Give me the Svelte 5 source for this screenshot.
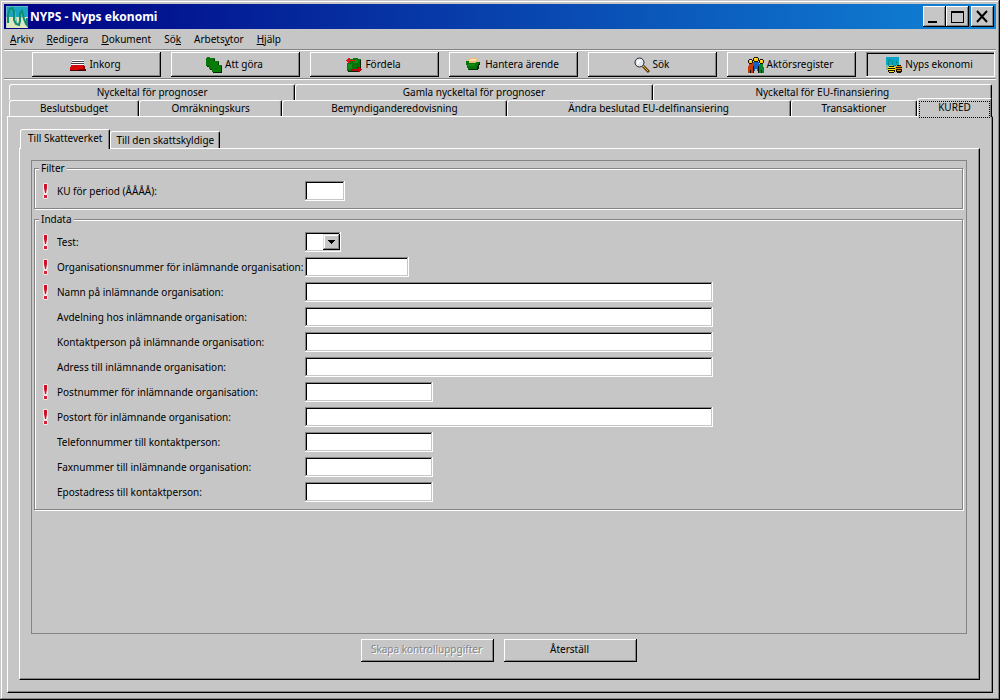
<script>
  const menu = [
    { pre: "", key: "A", post: "rkiv" },
    { pre: "", key: "R", post: "edigera" },
    { pre: "", key: "D", post: "okument" },
    { pre: "Sö", key: "k", post: "" },
    { pre: "Arbets", key: "y", post: "tor" },
    { pre: "", key: "H", post: "jälp" },
  ];

  const tools = [
    { icon: "inbox", text: "Inkorg" },
    { icon: "todo", text: "Att göra" },
    { icon: "assign", text: "Fördela" },
    { icon: "handle", text: "Hantera ärende" },
    { icon: "search", text: "Sök" },
    { icon: "actors", text: "Aktörsregister" },
    { icon: "economy", text: "Nyps ekonomi" },
  ];

  const backTabs = [
    "Nyckeltal för prognoser",
    "Gamla nyckeltal för prognoser",
    "Nyckeltal för EU-finansiering",
  ];
  const frontTabs = [
    "Beslutsbudget",
    "Omräkningskurs",
    "Bemyndiganderedovisning",
    "Ändra beslutad EU-delfinansiering",
    "Transaktioner",
    "KURED",
  ];
  const innerTabs = ["Till Skatteverket", "Till den skattskyldige"];

  let activeTool = $state("Nyps ekonomi");
  let activeTab = $state("KURED");
  let activeInner = $state("Till Skatteverket");

  let period = $state("");
  let test = $state("");

  let fields = $state([
    { id: "orgnr", label: "Organisationsnummer för inlämnande organisation:", required: true, size: "code", value: "" },
    { id: "namn", label: "Namn på inlämnande organisation:", required: true, size: "long", value: "" },
    { id: "avdelning", label: "Avdelning hos inlämnande organisation:", required: false, size: "long", value: "" },
    { id: "kontakt", label: "Kontaktperson på inlämnande organisation:", required: false, size: "long", value: "" },
    { id: "adress", label: "Adress till inlämnande organisation:", required: false, size: "long", value: "" },
    { id: "postnr", label: "Postnummer för inlämnande organisation:", required: true, size: "medium", value: "" },
    { id: "postort", label: "Postort för inlämnande organisation:", required: true, size: "long", value: "" },
    { id: "telefon", label: "Telefonnummer till kontaktperson:", required: false, size: "medium", value: "" },
    { id: "fax", label: "Faxnummer till inlämnande organisation:", required: false, size: "medium", value: "" },
    { id: "epost", label: "Epostadress till kontaktperson:", required: false, size: "medium", value: "" },
  ]);

  function reset() {
    period = "";
    test = "";
    fields.forEach((f) => {
      f.value = "";
    });
  }
</script>

{#snippet mark(required)}
  <span class="mark">
    {#if required}
      <svg width="5" height="16" viewBox="0 0 5 16">
        <path d="M1 0h3l1 1v8l-1 2 1 1v3l-1 1H1l-1-1v-3l1-1-1-2V1z" fill="#f7e7e7" />
        <path d="M1 1h3v4L3 10H2L1 5z" fill="#ce1029" />
        <path d="M1 12h3v3H1z" fill="#d62139" />
      </svg>
    {/if}
  </span>
{/snippet}

{#snippet toolIcon(name)}
  <svg width="16" height="16" viewBox="0 0 16 16" shape-rendering="crispEdges">
    {#if name === "inbox"}
      <path d="M2 3h12v1H2zM2 5h12v1H2zM1 7h13v1H1z" fill="#fff" />
      <path d="M2 4h12v1H2zM1 6h13v1H1z" fill="#42424a" />
      <path d="M1 8h13v1h1v3h1v1H0v-3h1z" fill="#d60808" />
      <path d="M14 8v1h1v3h1v1H9v-1h4V8z" fill="#840000" />
      <path d="M0 13h16v1H0z" fill="#420000" />
    {:else if name === "todo"}
      <path d="M0 1h1V0h3v1h5v9H1V9H0z" fill="#087308" />
      <path d="M8 2h1v8H1V9h7z" fill="#003900" />
      <path d="M3 4h1V3h3v1h6v9H4v-1H3z" fill="#087b08" />
      <path d="M12 5h1v8H4v-1h8z" fill="#003900" />
      <path d="M6 8h1V7h3v1h6v8H7v-1H6z" fill="#087b08" />
      <path d="M7 15h9v1H7zM15 9h1v6h-1z" fill="#002900" />
    {:else if name === "assign"}
      <path d="M4 2h3V1h5v1h3v9h-2v3H1V6h3z" fill="#087308" />
      <path d="M14 3h1v8h-4v-1h3zM2 14h11v1H2z" fill="#002100" />
      <path d="M2 7h4v5H2zM8 3h4v3H8z" fill="#188c18" />
      <path d="M0 3h1V2h1V1h2v2h5v1H4v2H2V5H1V4H0z" fill="#e71018" />
      <path d="M5 12h7v-2h2v1h1v1h1v1h-1v1h-1v1h-2v-1H5z" fill="#b50810" />
    {:else if name === "handle"}
      <path d="M2 2h2V1h8v6H3V5H2z" fill="#e7bd7b" />
      <path d="M4 2h7v1H4zM3 3h7v1H3z" fill="#ffdea5" />
      <path d="M0 4h3v2h7V5h4v3h-1v4h-1v1H2v-2H1V8H0z" fill="#087308" />
      <path d="M2 7h7v2H2z" fill="#108c10" />
      <path d="M13 5h1v3h-1v4h-1v1H3v-1h8V9h1V7h1z" fill="#002900" />
    {:else if name === "search"}
      <path d="M9 9l6 6" stroke="#5a3908" stroke-width="3" shape-rendering="auto" />
      <path d="M9 9l5 5" stroke="#f7b529" stroke-width="1" shape-rendering="auto" />
      <circle cx="5.5" cy="5.5" r="4.5" fill="#dee7ef" stroke="#212121" stroke-width="1" shape-rendering="auto" />
      <path d="M3 4h1V3h3v2H5v2H3z" fill="#fff" />
    {:else if name === "actors"}
      <path d="M1 6h5v4H5v6H3v-3H2v3H0V9h1z" fill="#c63908" />
      <path d="M10 7h5v3h1v6h-2v-3h-1v3h-2v-6h-1z" fill="#088429" />
      <path d="M5 5h6v4h-1v5H9v-2H7v2H6V9H5z" fill="#1063c6" />
      <path d="M6 0h4v1h1v3h-1v1H6V4H5V1h1zM1 2h3v1h1v3H4v1H1V6H0V3h1zM12 2h3v1h1v3h-1v1h-3V6h-1V3h1z" fill="#181000" />
      <path d="M6 1h4v3H6zM1 3h3v3H1zM12 3h3v3h-3z" fill="#ffc610" />
      <path d="M7 1h1v1H7zM2 3h1v1H2zM13 3h1v1h-1z" fill="#fff" />
      <path d="M2 13h1v3H2zM13 13h1v3h-1zM5 9h1v7H5zM10 9h1v7h-1z" fill="#101010" />
    {:else}
      <path d="M0 0h13v9H0z" fill="#08a5c6" />
      <path d="M0 8h13v5H0z" fill="#84bda5" />
      <path d="M2 9V5l2-3 2 2 1 4 3 0 1-4" fill="none" stroke="#088c8c" />
      <path d="M3 9h5v1h1v5H8v1H3v-1H2v-5h1zM11 8h4v1h1v6h-1v1h-4v-1h-1V9h1z" fill="#181000" />
      <path d="M2 10h7v1H2zM2 12h7v1H2zM3 14h5v1H3z" fill="#f7e718" />
      <path d="M10 9h6v1h-6zM10 11h6v1h-6zM11 13h4v1h-4z" fill="#e78c08" />
    {/if}
  </svg>
{/snippet}

<div class="window">
  <header class="titlebar">
    <svg class="logo" width="22" height="22" viewBox="0 0 22 22">
      <rect width="22" height="12" fill="#18a5c6" />
      <rect y="11" width="22" height="11" fill="#dee7bd" />
      <path d="M3 16l-1-4 2-7 3-2 2 3 1 7 1 6M12 19l2-4 2-8M19 13l2 5" fill="none" stroke="#63b5a5" stroke-width="1" />
      <path d="M2 17V9l2-6 2-1 2 3v9l2 4 3 1 1-4V7l2-2 2 8 2 5 1 1V12" fill="none" stroke="#108c73" stroke-width="2" />
      <path d="M0 22V0h22" fill="none" stroke="#9cc6bd" stroke-width="1" />
    </svg>
    <h1>NYPS - Nyps ekonomi</h1>
    <div class="controls">
      <button class="raised" aria-label="Minimera">
        <svg width="23" height="21" viewBox="0 0 23 21"><path d="M5 15h9v2H5z" /></svg>
      </button>
      <button class="raised" aria-label="Maximera">
        <svg width="23" height="21" viewBox="0 0 23 21"><path fill-rule="evenodd" d="M5 5h13v12H5zM6 7v9h11V7z" /></svg>
      </button>
      <button class="raised close" aria-label="Stäng">
        <svg width="23" height="21" viewBox="0 0 23 21"><path d="M6 5l10 11M16 5L6 16" stroke="#000" stroke-width="2" /></svg>
      </button>
    </div>
  </header>

  <nav class="menu">
    {#each menu as item}
      <button>{item.pre}<u>{item.key}</u>{item.post}</button>
    {/each}
  </nav>

  <div class="toolbar">
    {#each tools as tool}
      <button
        class="raised"
        class:pressed={tool.text === activeTool}
        onclick={() => (activeTool = tool.text)}
      >
        {@render toolIcon(tool.icon)}
        <span>{tool.text}</span>
      </button>
    {/each}
  </div>

  <main>
    <div class="tabs back">
      {#each backTabs as tab}
        <button class="tab" onclick={() => (activeTab = tab)}>{tab}</button>
      {/each}
    </div>
    <div class="tabs front">
      {#each frontTabs as tab}
        <button class="tab" class:active={tab === activeTab} onclick={() => (activeTab = tab)}>
          <span>{tab}</span>
        </button>
      {/each}
    </div>

    <div class="panel outer">
      <div class="tabs inner">
        {#each innerTabs as tab}
          <button class="tab" class:active={tab === activeInner} onclick={() => (activeInner = tab)}>
            {tab}
          </button>
        {/each}
      </div>

      <form class="panel sheet" onsubmit={(e) => e.preventDefault()}>
        <div class="content">
          <fieldset>
            <legend>Filter</legend>
            <div class="row">
              {@render mark(true)}
              <label for="period">KU för period (ÅÅÅÅ):</label>
              <input id="period" class="year" type="text" bind:value={period} />
            </div>
          </fieldset>

          <fieldset>
            <legend>Indata</legend>
            <div class="row">
              {@render mark(true)}
              <label for="test">Test:</label>
              <span class="combo">
                <select id="test" bind:value={test}>
                  <option value=""></option>
                  <option value="J">J</option>
                  <option value="N">N</option>
                </select>
                <span class="arrow">
                  <svg width="7" height="4" viewBox="0 0 7 4"><path d="M0 0h7v1H6v1H5v1H4v1H3V3H2V2H1V1H0z" /></svg>
                </span>
              </span>
            </div>
            {#each fields as field}
              <div class="row">
                {@render mark(field.required)}
                <label for={field.id}>{field.label}</label>
                <input id={field.id} class={field.size} type="text" bind:value={field.value} />
              </div>
            {/each}
          </fieldset>
        </div>

        <div class="actions">
          <button class="raised" type="submit" disabled>Skapa kontrolluppgifter</button>
          <button class="raised" type="button" onclick={reset}>Återställ</button>
        </div>
      </form>
    </div>
  </main>
</div>

<style>
  :global(body) {
    margin: 0;
    background: #c6c6c6;
  }

  .window {
    display: flex;
    flex-direction: column;
    min-height: 100vh;
    box-sizing: border-box;
    padding: 4px;
    background: #c6c6c6;
    box-shadow: inset -1px -1px #000, inset 1px 1px #c6c6c6, inset -2px -2px #848484, inset 2px 2px #fff;
    color: #000;
    font-family: "Noto Sans", "Liberation Sans", sans-serif;
    font-size: 10px;
    line-height: 13px;
  }

  button, input, select {
    box-sizing: border-box;
    margin: 0;
    padding: 0;
    border: 0;
    border-radius: 0;
    background: #c6c6c6;
    color: #000;
    font: inherit;
  }

  svg {
    display: block;
    flex: none;
  }

  .raised {
    display: flex;
    align-items: center;
    justify-content: center;
    box-shadow: inset -1px -1px #000, inset 1px 1px #fff, inset -2px -2px #848484;
  }

  .raised.pressed {
    box-shadow: inset -1px -1px #fff, inset 1px 1px #848484, inset 2px 2px #000;
  }

  .titlebar {
    display: flex;
    align-items: center;
    gap: 2px;
    height: 25px;
    padding: 0 2px;
    background: linear-gradient(to right, #000084, #1084d6);
  }

  h1 {
    flex: 1;
    margin: 0;
    color: #fff;
    font-size: 12px;
    line-height: 16px;
    white-space: nowrap;
  }

  .controls {
    display: flex;
  }

  .controls button {
    width: 23px;
    height: 21px;
  }

  .controls .close {
    margin-left: 2px;
  }

  .menu {
    display: flex;
    align-items: center;
    gap: 13px;
    height: 20px;
    padding: 0 6px;
  }

  .toolbar {
    display: flex;
    gap: 10px;
    padding: 3px 1px 3px 28px;
    box-shadow: inset 0 1px #848484, inset 0 2px #fff, inset 0 -1px #fff, inset 0 -2px #848484;
  }

  .toolbar button {
    flex: 1;
    gap: 3px;
    height: 25px;
    padding-right: 2px;
    white-space: nowrap;
  }

  main {
    display: flex;
    flex: 1;
    flex-direction: column;
    padding: 4px 3px 3px;
  }

  .tabs {
    display: grid;
  }

  .tab {
    height: 16px;
    border-top: 1px solid #fff;
    border-left: 1px solid #fff;
    border-right: 1px solid #000;
    border-radius: 3px 2px 0 0;
    box-shadow: inset -1px 0 #848484;
    white-space: nowrap;
  }

  .back, .front {
    margin: 0 1px 0 2px;
  }

  .back {
    grid-template-columns: 286fr 357fr 339fr;
  }

  .front {
    grid-template-columns: 130fr 143fr 224fr 284fr 126fr 75fr;
  }

  .tab.active {
    position: relative;
    z-index: 1;
  }

  .front .active {
    height: 19px;
    margin: -2px 0 -1px;
    padding: 2px 1px 1px;
  }

  .front .active span {
    display: block;
    height: 15px;
    border: 1px dotted #000;
    line-height: 11px;
  }

  .inner {
    grid-template-columns: auto auto;
    justify-content: start;
    align-items: end;
    padding-left: 1px;
  }

  .inner .tab {
    height: 17px;
    padding: 0 5px;
  }

  .inner .active {
    height: 20px;
    margin-bottom: -1px;
    padding: 0 7px 2px;
  }

  .panel {
    display: flex;
    flex: 1;
    flex-direction: column;
    border-top: 1px solid #fff;
    border-left: 1px solid #fff;
    border-right: 1px solid #000;
    border-bottom: 1px solid #000;
    box-shadow: inset -1px -1px #848484;
  }

  .outer {
    padding: 12px 12px 12px 11px;
  }

  .sheet {
    padding: 11px 12px 0 11px;
  }

  .content {
    flex: 1;
    padding: 1px 3px 4px 2px;
    border: 1px solid #848484;
  }

  fieldset {
    min-width: 0;
    margin: 0 0 4px;
    padding: 6px 4px 7px;
    border: 1px solid #848484;
    box-shadow: inset 1px 1px #fff, 1px 1px #fff;
  }

  legend {
    padding: 0 2px;
    background: #c6c6c6;
  }

  .row {
    display: grid;
    grid-template-columns: 14px 248px 1fr;
    align-items: center;
    height: 20px;
    padding-left: 4px;
  }

  .row + .row {
    margin-top: 5px;
  }

  label {
    white-space: nowrap;
  }

  input, select {
    height: 20px;
    background: #fff;
    box-shadow: inset -1px -1px #fff, inset 1px 1px #848484, inset -2px -2px #c6c6c6, inset 2px 2px #000;
  }

  input {
    padding: 2px 4px;
  }

  .year {
    width: 40px;
  }

  .code {
    width: 104px;
  }

  .medium {
    width: 128px;
  }

  .long {
    width: 100%;
    max-width: 408px;
  }

  .combo {
    position: relative;
    width: 36px;
    height: 20px;
  }

  select {
    display: block;
    width: 100%;
    padding: 0 18px 0 4px;
    appearance: none;
  }

  .arrow {
    position: absolute;
    top: 2px;
    right: 1px;
    display: flex;
    align-items: center;
    justify-content: center;
    width: 17px;
    height: 16px;
    background: #c6c6c6;
    box-shadow: inset -1px -1px #000, inset 1px 1px #dedede, inset -2px -2px #848484, inset 2px 2px #fff;
    pointer-events: none;
  }

  .actions {
    display: flex;
    justify-content: center;
    gap: 10px;
    padding: 5px 0 17px;
  }

  .actions button {
    width: 133px;
    height: 23px;
    padding: 0 2px 2px 0;
    white-space: nowrap;
  }

  .actions button:disabled {
    color: #848484;
    text-shadow: 1px 1px #fff;
  }
</style>
